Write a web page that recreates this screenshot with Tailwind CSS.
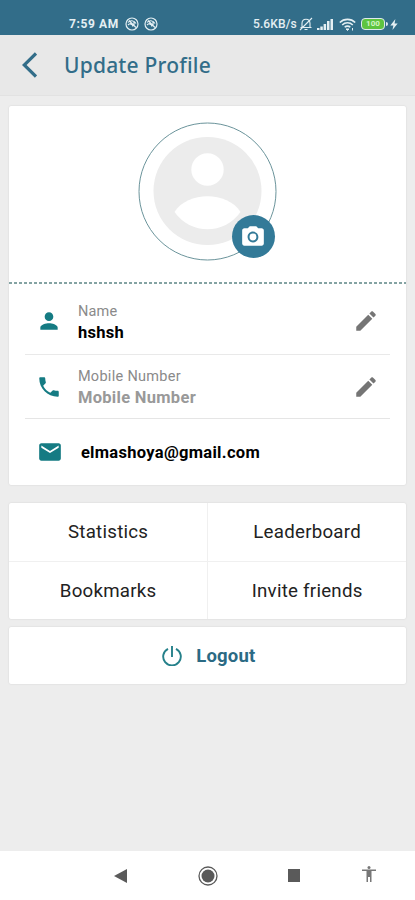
<!DOCTYPE html>
<html lang="en">
<head>
  <meta charset="UTF-8">
  <meta name="viewport" content="width=device-width, initial-scale=1.0">
  <title>Update Profile</title>
  <script src="https://cdn.jsdelivr.net/npm/@tailwindcss/browser@4"></script>
</head>
<body class="bg-[#ededed] font-[Roboto,sans-serif] text-black w-[415px] h-[900px] flex flex-col overflow-hidden">

  <!-- Status bar -->
  <div class="h-[35px] shrink-0 bg-[#326d89] text-[#e4eff3] flex items-end justify-between pl-[69px] pr-[17px] pb-[3px]">
    <div class="flex items-center h-4">
      <span class="text-[12px] font-bold w-[50px] whitespace-nowrap tracking-[0.6px]">7:59 AM</span>
      <svg class="w-[14px] h-[14px] ml-[6px]" viewBox="0 0 14 14" fill="none" stroke="currentColor" stroke-width="1.2">
        <circle cx="7" cy="7" r="6"/><path d="M3 5.500C5 3 9 3 11 6.500M3 8C5 6 7 6 8 9.500M4 3.500l7 7M9 4v3.500H5.500"/>
      </svg>
      <svg class="w-[14px] h-[14px] ml-[5px]" viewBox="0 0 14 14" fill="none" stroke="currentColor" stroke-width="1.2">
        <circle cx="7" cy="7" r="6"/><path d="M3 5.500C5 3 9 3 11 6.500M3 8C5 6 7 6 8 9.500M4 3.500l7 7M9 4v3.500H5.500"/>
      </svg>
    </div>
    <div class="flex items-center h-4">
      <span class="text-[12px] font-medium w-[44px] whitespace-nowrap tracking-[0.1px]">5.6KB/s</span>
      <svg class="w-[14px] h-[14px] ml-[2px]" viewBox="0 0 14 14" fill="none" stroke="currentColor" stroke-width="1.1">
        <path d="M3 10.500V6.500C3 3.500 4.700 2.200 7 2.200s4 1.300 4 4.300v4zM1.500 10.500h11M5.500 12.500h3M1 13L13 1"/>
      </svg>
      <svg class="w-[16px] h-[12px] ml-[4px] mr-px" viewBox="0 0 16 12" fill="currentColor">
        <path d="M0 10h2.500v2H0zM3.300 8.500h2.500V12H3.300zM6.600 6h2.500v6H6.600zM10 3h2.500v9H10zM13.500 1H16v11h-2.500z"/>
      </svg>
      <svg class="w-[17px] h-[13px] ml-[5px]" viewBox="0 0 17 13" fill="none" stroke="currentColor" stroke-width="1.6">
        <path d="M.8 4.500C5 .3 12 .3 16.200 4.500M3.200 7c3-3 7.600-3 10.600 0M5.700 9.300c1.600-1.600 4-1.600 5.600 0"/><path d="M7 11l1.500 1.500L10 11zM13.500 10v2.500" fill="currentColor" stroke-width="1"/>
      </svg>
      <div class="relative ml-[5px] w-[24px] h-[12px] border-[1.5px] border-[#dfe9ee] rounded-[4px] bg-[#5ec43f] text-[8px] leading-[10px] font-bold text-center text-[#d3f5c4]">100
        <span class="absolute -right-[3.5px] top-[2.500px] w-[2px] h-[4px] bg-[#dfe9ee] rounded-r"></span>
      </div>
      <svg class="w-[8px] h-[11px] ml-[5px]" viewBox="0 0 8 12" fill="currentColor"><path d="M5.500 0L0 7h3.300L2.300 12 8 5H4.600z"/></svg>
    </div>
  </div>

  <!-- Header -->
  <div class="h-[61px] shrink-0 bg-[#e8e8e8] border-b border-[#e2e2e2] flex items-center pl-[22px] text-[#326d89]">
    <svg class="w-[15px] h-[26px]" viewBox="0 0 15 26" fill="none" stroke="currentColor" stroke-width="3.200"><path d="M14 1.500L2.200 13 14 24.500"/></svg>
    <h1 class="ml-[27px] text-[21px] leading-none font-medium font-['Noto_Sans',sans-serif] whitespace-nowrap tracking-[0.2px]">Update Profile</h1>
  </div>

  <div class="flex-1 pl-[9.4px] pr-[8.6px] pt-[10px]">

    <!-- Profile card -->
    <div class="bg-white h-[379px] rounded-[2px] shadow-[0_0_2px_rgba(0,0,0,0.13)]">
      <div class="h-[176px] flex justify-center pt-[16px]">
        <div class="relative w-[139px] h-[139px]">
          <svg class="w-full h-full" viewBox="0 0 139 139">
            <circle cx="69.500" cy="69.500" r="68.500" fill="none" stroke="#6b949b" stroke-width="1"/>
            <circle cx="69.500" cy="69" r="54" fill="#ececec"/>
            <circle cx="69.500" cy="47.500" r="16.200" fill="#fff"/>
            <path d="M36.500 90C49.500 69 89.500 69 102.500 90C86.500 113 52.500 113 36.500 90Z" fill="#fff"/>
          </svg>
          <div class="absolute left-[93.5px] top-[93px] w-[43px] h-[43px] rounded-full bg-[#337a98] flex items-center justify-center">
            <svg class="w-[26px] h-[26px]" viewBox="0 0 24 24" fill="#fff">
              <circle cx="12" cy="12" r="3.200"/>
              <path d="M9 2L7.170 4H4c-1.100 0-2 .9-2 2v12c0 1.100.9 2 2 2h16c1.100 0 2-.9 2-2V6c0-1.100-.9-2-2-2h-3.170L15 2H9zm3 15c-2.760 0-5-2.240-5-5s2.240-5 5-5 5 2.240 5 5-2.240 5-5 5z"/>
            </svg>
          </div>
        </div>
      </div>
      <svg class="block w-full h-[2px]" viewBox="0 0 397 2"><path d="M0 1H397" stroke="#5c8585" stroke-width="1.500" stroke-dasharray="3 2"/></svg>

      <div class="mx-[16px] h-[71px] border-b border-[#e9e9e9] flex items-center">
        <svg class="w-[26px] h-[26px] ml-[10.5px] mt-[3px]" viewBox="0 0 24 24" fill="#157b83"><path d="M12 12c2.210 0 4-1.790 4-4s-1.790-4-4-4-4 1.790-4 4 1.790 4 4 4zm0 2c-2.670 0-8 1.340-8 4v2h16v-2c0-2.660-5.330-4-8-4z"/></svg>
        <div class="ml-[16px] flex-1 pt-[6px]">
          <div class="text-[14.500px] leading-[21px] text-[#8a8a8a] tracking-[0.25px]">Name</div>
          <div class="text-[16.500px] leading-[21px] font-bold tracking-[0.3px]">hshsh</div>
        </div>
        <svg class="w-[26px] h-[26px] mr-[11px] mt-[4px]" viewBox="0 0 24 24" fill="#757575"><path d="M3 17.250V21h3.750L17.810 9.940l-3.750-3.750L3 17.250zM20.710 7.040c.39-.39.39-1.020 0-1.410l-2.340-2.340c-.39-.39-1.020-.39-1.410 0l-1.830 1.830 3.750 3.750 1.830-1.830z"/></svg>
      </div>

      <div class="mx-[16px] h-[64px] border-b border-[#e5e5e5] flex items-center">
        <svg class="w-[26px] h-[26px] ml-[10.5px]" viewBox="0 0 24 24" fill="#157b83"><path d="M6.620 10.790c1.440 2.830 3.760 5.140 6.590 6.590l2.200-2.200c.27-.27.67-.36 1.020-.24 1.120.37 2.330.57 3.570.57.550 0 1 .45 1 1V20c0 .55-.45 1-1 1-9.390 0-17-7.610-17-17 0-.55.45-1 1-1h3.500c.55 0 1 .45 1 1 0 1.250.2 2.450.57 3.570.11.35.03.74-.25 1.020l-2.200 2.200z"/></svg>
        <div class="ml-[16px] flex-1">
          <div class="text-[14.500px] leading-[21px] text-[#8a8a8a] tracking-[0.3px]">Mobile Number</div>
          <div class="text-[16.500px] leading-[21px] font-bold text-[#999] tracking-[0.3px]">Mobile Number</div>
        </div>
        <svg class="w-[26px] h-[26px] mr-[11px]" viewBox="0 0 24 24" fill="#757575"><path d="M3 17.250V21h3.750L17.810 9.940l-3.750-3.750L3 17.250zM20.710 7.040c.39-.39.39-1.020 0-1.410l-2.340-2.340c-.39-.39-1.020-.39-1.410 0l-1.830 1.830 3.750 3.750 1.830-1.830z"/></svg>
      </div>

      <div class="mx-[16px] h-[66px] flex items-center">
        <svg class="w-[26px] h-[26px] ml-[12px]" viewBox="0 0 24 24" fill="#157b83"><path d="M20 4H4c-1.100 0-1.990.9-1.990 2L2 18c0 1.100.9 2 2 2h16c1.100 0 2-.9 2-2V6c0-1.100-.9-2-2-2zm0 4l-8 5-8-5V6l8 5 8-5v2z"/></svg>
        <div class="ml-[17.500px] pt-[2px] text-[16.500px] font-bold tracking-[0.3px]">elmashoya@gmail.com</div>
      </div>
    </div>

    <!-- Links -->
    <div class="mt-[18px] h-[116px] bg-white rounded-[2px] shadow-[0_0_2px_rgba(0,0,0,0.13)] grid grid-cols-2 grid-rows-[59px_57px] text-[18.700px] text-[#222] tracking-[0.25px]">
      <a class="flex items-center justify-center pt-px border-r border-b border-[#f0f0f0]">Statistics</a>
      <a class="flex items-center justify-center pt-px border-b border-[#f0f0f0]">Leaderboard</a>
      <a class="flex items-center justify-center pt-px border-r border-[#f0f0f0]">Bookmarks</a>
      <a class="flex items-center justify-center pt-px">Invite friends</a>
    </div>

    <button class="mt-[8px] w-full h-[57px] bg-white rounded-[2px] shadow-[0_0_2px_rgba(0,0,0,0.13)] flex items-center justify-center pl-[2px]">
      <svg class="w-[20px] h-[20px]" viewBox="0 0 20 20" fill="none" stroke="#25808a" stroke-width="1.900"><path d="M10 0V11M6 2.800A8.800 8.800 0 1 0 14 2.800"/></svg>
      <span class="ml-[14px] pt-[2px] text-[18.500px] font-bold text-[#2b6a84] tracking-[0.2px]">Logout</span>
    </button>
  </div>

  <!-- Android navigation -->
  <div class="h-[49px] shrink-0 bg-white flex items-center pl-[114px] text-[#5a5a5a]">
    <svg class="w-[13px] h-[14px]" viewBox="0 0 13 14" fill="currentColor"><path d="M13 0v14L0 7z"/></svg>
    <svg class="w-[20px] h-[20px] ml-[70.5px]" viewBox="0 0 20 20"><circle cx="10" cy="10" r="9" fill="none" stroke="currentColor" stroke-width="1.300"/><circle cx="10" cy="10" r="6.500" fill="currentColor"/></svg>
    <div class="w-[12px] h-[13px] ml-[70.5px] bg-[#5a5a5a]"></div>
    <svg class="w-[14px] h-[16px] ml-[61.5px] mb-[3px]" viewBox="0 0 14 16" fill="#777"><circle cx="7" cy="1.500" r="1.500"/><path d="M0 3.500h14V5H9.500v11H8v-5H6v5H4.500V5H0z"/></svg>
  </div>

</body>
</html>
